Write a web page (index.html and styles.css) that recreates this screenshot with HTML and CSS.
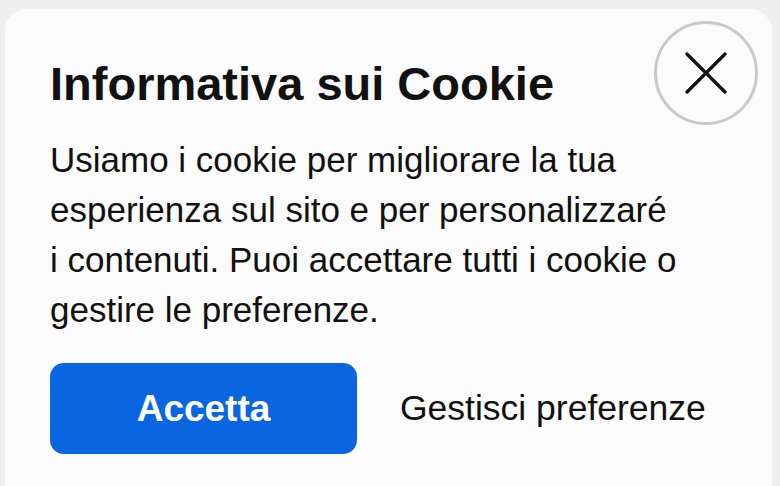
FILE: index.html
```html
<!DOCTYPE html>
<html lang="it">
<head>
    <meta charset="UTF-8">
    <meta name="viewport" content="width=device-width, initial-scale=1.0">
    <title>Informativa sui Cookie</title>
    <link rel="stylesheet" href="styles.css">
</head>
<body>

    <div class="cookie-card">
        <div class="cookie-head">
            <h1>Informativa sui Cookie</h1>
            <button class="close-btn" aria-label="Chiudi">
                <svg width="42" height="42" viewBox="0 0 42 42">
                    <path d="M2 2 L40 40 M40 2 L2 40" stroke="#111" stroke-width="3.2" stroke-linecap="round" fill="none"/>
                </svg>
            </button>
        </div>

        <p class="cookie-text">
            Usiamo i cookie per migliorare la tua<br>
            esperienza sul sito e per personalizzaré<br>
            i contenuti. Puoi accettare tutti i cookie o<br>
            gestire le preferenze.
        </p>

        <div class="cookie-actions">
            <button class="accept-btn">Accetta</button>
            <button class="prefs-btn">Gestisci preferenze</button>
        </div>
    </div>

</body>
</html>
```

FILE: styles.css
```css
body {
    font-family: "Liberation Sans", Arial, sans-serif;
    margin: 0;
    padding: 9px 8px 0 5px;
    box-sizing: border-box;
    background-color: #efefef;
    color: #111;
    height: 100vh;
    display: flex;
    flex-direction: column;
    overflow: hidden;
}

.cookie-card {
    flex: 1;
    background-color: #fbfbfb;
    border-radius: 22px 22px 0 0;
    padding: 12px 14px 0 45px;
}

.cookie-head {
    display: flex;
    justify-content: space-between;
    align-items: flex-start;
}

h1 {
    font-size: 47px;
    font-weight: bold;
    margin: 39px 0 0;
    line-height: 1;
}

.close-btn {
    width: 104px;
    height: 104px;
    border-radius: 50%;
    border: 3px solid #c9c9c9;
    background: transparent;
    display: flex;
    justify-content: center;
    align-items: center;
    padding: 0;
    cursor: pointer;
}

.cookie-text {
    font-size: 35px;
    line-height: 50px;
    margin: 10px 0 0;
}

.cookie-actions {
    display: flex;
    align-items: center;
    gap: 43px;
    margin-top: 28px;
}

.accept-btn {
    width: 307px;
    height: 91px;
    border: none;
    border-radius: 14px;
    background-color: #0a66e0;
    color: #fff;
    font-family: inherit;
    font-size: 37px;
    font-weight: bold;
    cursor: pointer;
}

.prefs-btn {
    border: none;
    background: transparent;
    color: #111;
    font-family: inherit;
    font-size: 35.5px;
    padding: 0;
    cursor: pointer;
}
```
